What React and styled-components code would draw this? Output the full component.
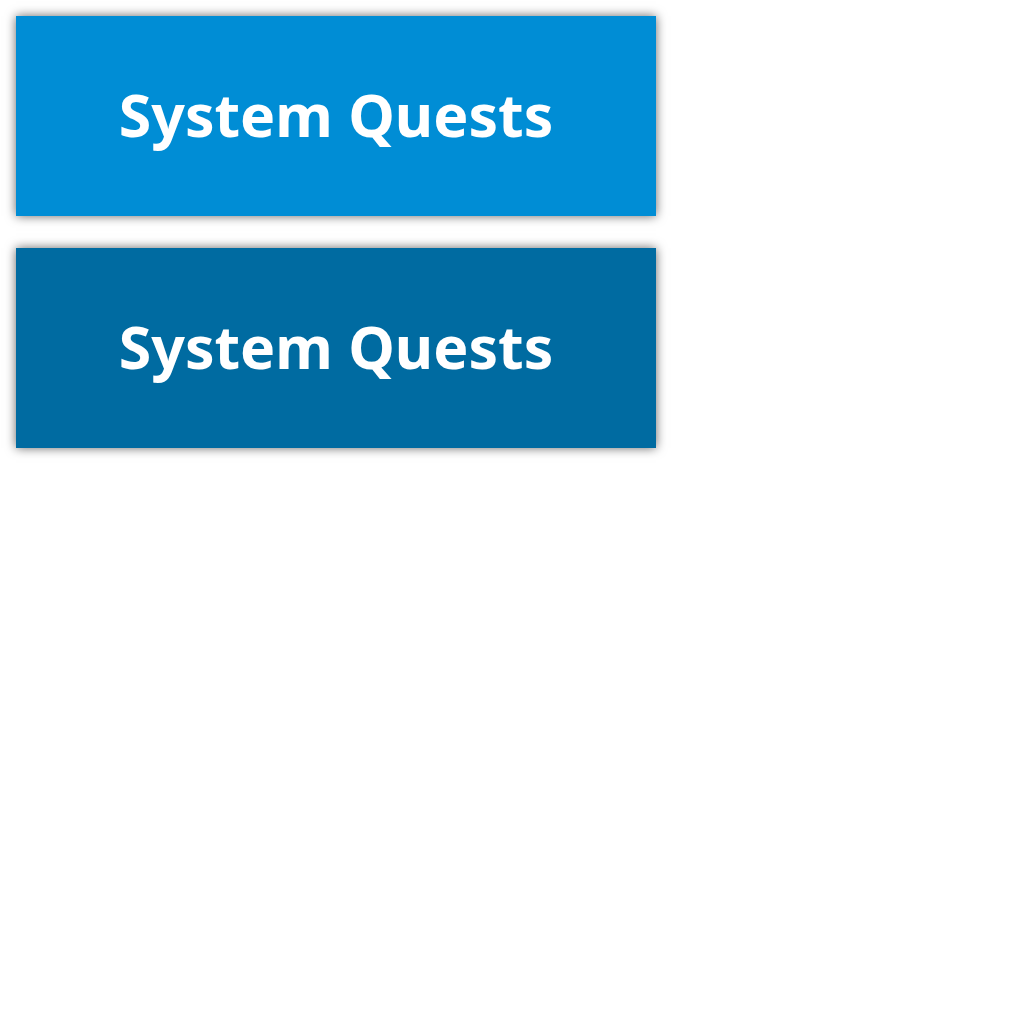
import React from "react";
import styled, { createGlobalStyle } from "styled-components";

const GlobalStyle = createGlobalStyle`
  body {
    margin: 0;
    background: #fff;
  }
`;

const Stack = styled.main`
  display: flex;
  flex-direction: column;
  align-items: flex-start;
  gap: 32px;
  padding: 16px;
`;

const TileButton = styled.button`
  display: flex;
  align-items: center;
  justify-content: center;
  box-sizing: border-box;
  width: 100%;
  max-width: 640px;
  height: 200px;
  padding: 0 0 4px;
  border: 0;
  border-radius: 0;
  background: ${({ $color }) => $color};
  box-shadow: 0 0 10px rgba(0, 0, 0, 0.6);
  color: #fff;
  font: 700 59px/80px "Segoe UI", "Noto Sans", "Open Sans", sans-serif;
  cursor: pointer;
`;

export default function App() {
  return (
    <>
      <GlobalStyle />
      <Stack>
        <TileButton type="button" $color="#008dd5">System Quests</TileButton>
        <TileButton type="button" $color="#006ba1">System Quests</TileButton>
      </Stack>
    </>
  );
}
